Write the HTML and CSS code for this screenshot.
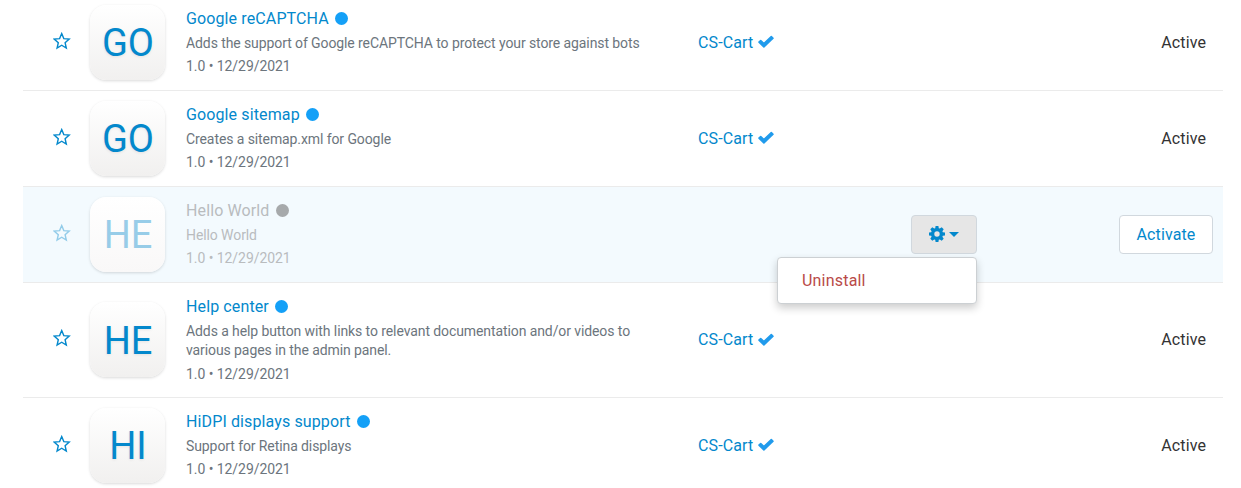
FILE: index.html
```html
<!DOCTYPE html>
<html lang="en">
<head>
<meta charset="utf-8">
<title>Add-ons</title>
<link rel="stylesheet" href="styles.css">
</head>
<body>
<svg class="defs" aria-hidden="true">
  <symbol id="star" viewBox="0 0 18 18"><path d="M8.700 1.600l2.100 5 5.400.5-4.100 3.600 1.200 5.300-4.600-2.800L4.100 16l1.200-5.300-4.100-3.600 5.400-.5z" fill="none" stroke="currentColor" stroke-width="1.4" stroke-linejoin="miter"/></symbol>
  <symbol id="check" viewBox="0 0 16 14"><path d="M1 7.100L2.700 5.500l3.200 3.100L13.300 1.500 15 3.200 5.900 12z" fill="currentColor" stroke="currentColor" stroke-width="1.600" stroke-linejoin="round"/></symbol>
  <symbol id="gear" viewBox="0 0 16 16"><path fill="currentColor" fill-rule="evenodd" d="M6.600 0h2.800l.4 2.200 1 .4 1.900-1.300 2 2-1.300 1.900.4 1 2.200.4v2.800l-2.200.4-.4 1 1.300 1.900-2 2-1.900-1.300-1 .4-.4 2.200H6.600l-.4-2.200-1-.4-1.900 1.300-2-2 1.300-1.900-.4-1L0 9.400V6.600l2.200-.4.4-1-1.300-1.900 2-2 1.900 1.300 1-.4zM8 5.300a2.700 2.700 0 1 0 0 5.400 2.700 2.700 0 0 0 0-5.400z"/></symbol>
</svg>
<main class="addons">
  <section class="row">
    <svg class="star"><use href="#star"/></svg>
    <div class="logo">GO</div>
    <div class="info">
      <div class="name">Google reCAPTCHA<i class="dot"></i></div>
      <div class="desc">Adds the support of Google reCAPTCHA to protect your store against bots</div>
      <div class="meta">1.0 • 12/29/2021</div>
    </div>
    <div class="vendor">CS-Cart<svg class="check"><use href="#check"/></svg></div>
    <div class="tools"></div>
    <div class="status">Active</div>
  </section>
  <section class="row">
    <svg class="star"><use href="#star"/></svg>
    <div class="logo">GO</div>
    <div class="info">
      <div class="name">Google sitemap<i class="dot"></i></div>
      <div class="desc">Creates a sitemap.xml for Google</div>
      <div class="meta">1.0 • 12/29/2021</div>
    </div>
    <div class="vendor">CS-Cart<svg class="check"><use href="#check"/></svg></div>
    <div class="tools"></div>
    <div class="status">Active</div>
  </section>
  <section class="row disabled">
    <svg class="star"><use href="#star"/></svg>
    <div class="logo"><span class="initials">HE</span></div>
    <div class="info">
      <div class="name">Hello World<i class="dot"></i></div>
      <div class="desc">Hello World</div>
      <div class="meta">1.0 • 12/29/2021</div>
    </div>
    <div class="vendor"></div>
    <div class="tools">
      <button class="btn gear-btn"><svg class="gear"><use href="#gear"/></svg><i class="caret"></i></button>
      <div class="menu">Uninstall</div>
    </div>
    <div class="status"><button class="btn activate">Activate</button></div>
  </section>
  <section class="row tall">
    <svg class="star"><use href="#star"/></svg>
    <div class="logo">HE</div>
    <div class="info">
      <div class="name">Help center<i class="dot"></i></div>
      <div class="desc">Adds a help button with links to relevant documentation and/or videos to various pages in the admin panel.</div>
      <div class="meta">1.0 • 12/29/2021</div>
    </div>
    <div class="vendor">CS-Cart<svg class="check"><use href="#check"/></svg></div>
    <div class="tools"></div>
    <div class="status">Active</div>
  </section>
  <section class="row">
    <svg class="star"><use href="#star"/></svg>
    <div class="logo">HI</div>
    <div class="info">
      <div class="name">HiDPI displays support<i class="dot"></i></div>
      <div class="desc">Support for Retina displays</div>
      <div class="meta">1.0 • 12/29/2021</div>
    </div>
    <div class="vendor">CS-Cart<svg class="check"><use href="#check"/></svg></div>
    <div class="tools"></div>
    <div class="status">Active</div>
  </section>
</main>
</body>
</html>
```
FILE: styles.css
```css
* { box-sizing: border-box; }
html { overflow: hidden; }
body {
  margin: 0;
  height: 488px;
  overflow: hidden;
  background: #fff;
  font: 16px/20px Roboto, sans-serif;
  letter-spacing: .1px;
  color: #333;
}
.defs { display: none; }
.addons { width: 1200px; margin: -5px 0 0 23px; }
.row {
  display: grid;
  grid-template-columns: 37px 96px 512px 181px 98px 1fr;
  align-items: center;
  min-height: 96px;
  padding: 0 10px 0 30px;
  border-bottom: 1px solid #ebebeb;
}
.star { width: 18px; height: 18px; margin-top: -3px; color: #0388cc; }
.tall .star { margin-top: -4px; }
.logo {
  width: 75px;
  height: 75px;
  display: flex;
  align-items: center;
  justify-content: center;
  padding: 1px 0 0 1px;
  border-radius: 16px;
  background: linear-gradient(#fff, #f1f0ef);
  box-shadow: 0 1px 3px rgba(0, 0, 0, .15);
  color: #0388cc;
  font-size: 38px;
  line-height: 38px;
  letter-spacing: 0;
  text-shadow: 0 1px 3px rgba(0, 0, 0, .08);
}
.tall .logo { margin-top: -1px; padding-top: 2px; }
.info { width: 470px; align-self: start; padding: 14px 0 13px; }
.name { display: flex; align-items: center; color: #0388cc; letter-spacing: .12px; }
.dot { width: 13px; height: 13px; margin: -1px 0 0 6px; border-radius: 50%; background: #14a0f7; }
.desc { margin-top: 5px; font-size: 14px; line-height: 19px; letter-spacing: -.093px; color: #6c757d; }
.tall .desc { padding-bottom: 1px; }
.meta { margin-top: 3px; font-size: 14px; line-height: 20px; letter-spacing: -.06px; color: #6c757d; }
.vendor { display: flex; align-items: center; color: #0388cc; letter-spacing: .12px; }
.check { width: 16px; height: 14px; margin: -1px 0 0 5px; color: #219bec; }
.status { padding-right: 7px; text-align: right; }
.tools { position: relative; }
.disabled { background: #f3fafe; }
.disabled .star { opacity: .4; }
.disabled .logo { background: linear-gradient(#fff, #f9f8f8); text-shadow: none; }
.initials { opacity: .4; }
.disabled .name, .disabled .desc, .disabled .meta { color: #b9bcbe; }
.disabled .dot { background: #a6a9ab; }
.disabled .status { padding-right: 0; }
.btn {
  height: 39px;
  padding: 0;
  border: 1px solid #d1d8de;
  border-radius: 4px;
  background: #fff;
  color: #0388cc;
  font: inherit;
  letter-spacing: .12px;
  vertical-align: top;
}
.gear-btn { width: 66px; display: flex; align-items: center; justify-content: center; margin-left: auto; background: #e6e6e6; }
.gear { width: 16px; height: 16px; margin-top: -2px; }
.caret { margin: 0 0 0 4px; border: 5px solid transparent; border-top-color: currentColor; border-bottom: 0; }
.activate { width: 94px; }
.menu {
  position: absolute;
  z-index: 2;
  top: 42px;
  right: 0;
  width: 200px;
  height: 47px;
  padding: 13px 24px;
  border: 1px solid #ccd0d3;
  border-radius: 4px;
  background: #fff;
  box-shadow: 0 4px 9px rgba(0, 0, 0, .2);
  color: #b94a48;
  letter-spacing: .2px;
}
```
